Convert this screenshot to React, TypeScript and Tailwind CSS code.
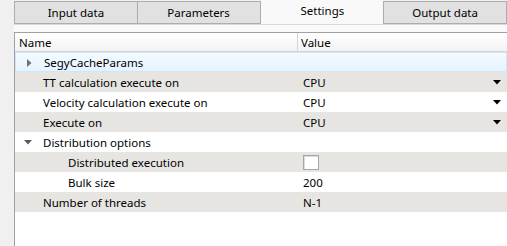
const tabs = ['Input data', 'Parameters', 'Settings', 'Output data'];

type Row = {
  name: string;
  value?: string;
  level: number;
  arrow?: 'right' | 'down';
  combo?: boolean;
  check?: boolean;
  selected?: boolean;
};

const rows: Row[] = [
  { name: 'SegyCacheParams', level: 0, arrow: 'right', selected: true },
  { name: 'TT calculation execute on', value: 'CPU', level: 0, combo: true },
  { name: 'Velocity calculation execute on', value: 'CPU', level: 0, combo: true },
  { name: 'Execute on', value: 'CPU', level: 0, combo: true },
  { name: 'Distribution options', level: 0, arrow: 'down' },
  { name: 'Distributed execution', level: 1, check: true },
  { name: 'Bulk size', value: '200', level: 1 },
  { name: 'Number of threads', value: 'N-1', level: 0 },
];

export default function App() {
  return (
    <div
      className="w-[507px] h-[246px] bg-[#f0f0f0] pl-[14px] overflow-hidden text-[11.5px] text-black"
      style={{ fontFamily: '"Segoe UI", "Noto Sans", sans-serif' }}
    >
      <div className="flex h-[24px] items-end">
        {tabs.map((t) => {
          const active = t === 'Settings';
          return (
            <div
              key={t}
              className={
                active
                  ? 'w-[124px] h-[24px] flex items-center justify-center bg-[#f9f9f9] pb-[2px]'
                  : 'w-[124px] h-[23px] flex items-center justify-center bg-[#e1e1e1] border border-[#adadad] -ml-px first:ml-0'
              }
            >
              {t}
            </div>
          );
        })}
      </div>
      <div className="bg-[#f9f9f9] border-t border-[#d9d9d9] h-[222px] pt-[7px]">
        <div className="bg-white border-l border-t border-[#a0a0a0] h-full">
          <div className="flex h-[19px] bg-gradient-to-b from-white to-[#f3f3f3] border-b border-[#d5d5d5] items-center">
            <div className="w-[283px] pl-[4px] pt-[1px] border-r border-[#d5d5d5] h-full flex items-center">Name</div>
            <div className="flex-1 pl-[3px] pt-[1px]">Value</div>
          </div>
          {rows.map((r, i) => {
            const bg = r.selected
              ? 'bg-gradient-to-b from-[#f5fbff] to-[#e5f3ff] border border-[#cde6fb]'
              : i % 2 === 1
              ? 'bg-[#e7e5e2]'
              : 'bg-white';
            return (
              <div key={r.name} className={`flex h-[20px] items-center pt-[1px] ${bg}`}>
                <div className="w-[284px] flex items-center h-full">
                  <div className="w-[28px] flex items-center justify-center">
                    {r.arrow === 'right' && (
                      <svg width="5" height="8" viewBox="0 0 5 8" className="ml-[-2px]">
                        <path d="M0 0 L4.5 4 L0 8 Z" fill="#707070" />
                      </svg>
                    )}
                    {r.arrow === 'down' && (
                      <svg width="8" height="5" viewBox="0 0 8 5" className="ml-[-2px]">
                        <path d="M0 0 L8 0 L4 4.5 Z" fill="#5a5a5a" />
                      </svg>
                    )}
                  </div>
                  <span className={r.level === 1 ? 'pl-[25px]' : ''}>{r.name}</span>
                </div>
                <div className="flex-1 flex items-center h-full pl-[4px] pr-[6px]">
                  {r.check ? (
                    <div className="w-[16px] h-[15px] border border-[#a6a6a6] bg-white shadow-[inset_1px_1px_0_#dcdcdc]" />
                  ) : (
                    <span className="flex-1">{r.value}</span>
                  )}
                  {r.combo && (
                    <svg width="8" height="5" viewBox="0 0 8 5">
                      <path d="M0 0 L8 0 L4 4.5 Z" fill="#000" />
                    </svg>
                  )}
                </div>
              </div>
            );
          })}
        </div>
      </div>
    </div>
  );
}
